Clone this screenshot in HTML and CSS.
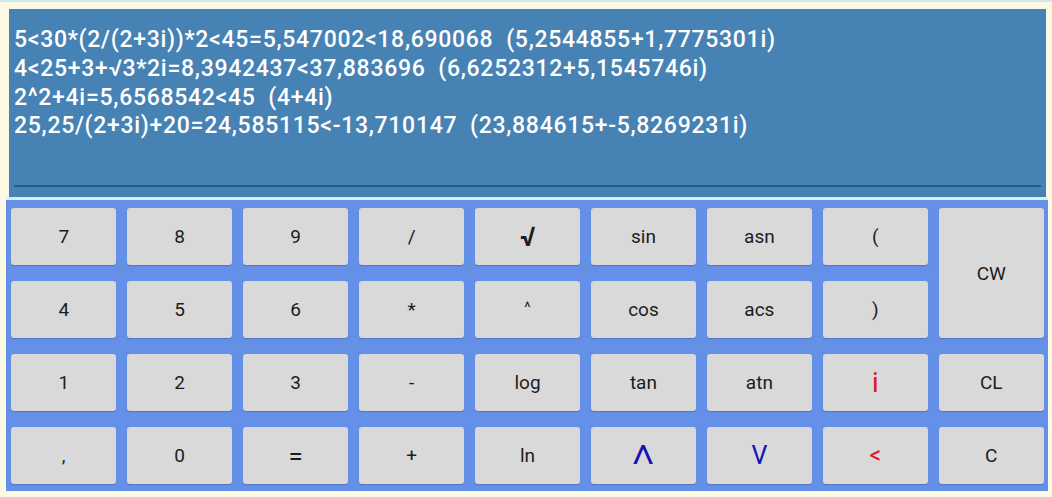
FILE: index.html
```html
<!DOCTYPE html>
<html>
<head>
<meta charset="utf-8">
<link rel="stylesheet" href="styles.css">
</head>
<body>
<div class="app">
  <div class="display">
    <div class="lines">
      <div class="line">5&lt;30*(2/(2+3i))*2&lt;45=5,547002&lt;18,690068&nbsp;&nbsp;(5,2544855+1,7775301i)</div>
      <div class="line">4&lt;25+3+√3*2i=8,3942437&lt;37,883696&nbsp;&nbsp;(6,6252312+5,1545746i)</div>
      <div class="line">2^2+4i=5,6568542&lt;45&nbsp;&nbsp;(4+4i)</div>
      <div class="line">25,25/(2+3i)+20=24,585115&lt;-13,710147&nbsp;&nbsp;(23,884615+-5,8269231i)</div>
    </div>
    <div class="rule"></div>
  </div>
  <div class="sep"></div>
  <div class="keypad">
    <div class="key">7</div>
    <div class="key">8</div>
    <div class="key">9</div>
    <div class="key">/</div>
    <div class="key sqrt">√</div>
    <div class="key">sin</div>
    <div class="key">asn</div>
    <div class="key">(</div>
    <div class="key tall">CW</div>

    <div class="key">4</div>
    <div class="key">5</div>
    <div class="key">6</div>
    <div class="key">*</div>
    <div class="key small">^</div>
    <div class="key">cos</div>
    <div class="key">acs</div>
    <div class="key">)</div>

    <div class="key">1</div>
    <div class="key">2</div>
    <div class="key">3</div>
    <div class="key">-</div>
    <div class="key">log</div>
    <div class="key">tan</div>
    <div class="key">atn</div>
    <div class="key red imag">i</div>
    <div class="key">CL</div>

    <div class="key">,</div>
    <div class="key">0</div>
    <div class="key eq">=</div>
    <div class="key">+</div>
    <div class="key">ln</div>
    <div class="key blue"><span class="wide">Λ</span></div>
    <div class="key blue">V</div>
    <div class="key red lt">&lt;</div>
    <div class="key">C</div>
  </div>
</div>
</body>
</html>
```

FILE: styles.css
```css
html, body {
  margin: 0;
  padding: 0;
}
body {
  background: #fbf8e4;
  width: 1052px;
  height: 497px;
  overflow: hidden;
  font-family: Roboto, "Liberation Sans", sans-serif;
}
.app {
  border-top: 2px solid #cfe7e9;
  padding: 0 4px 0 6px;
}
.display {
  margin: 7px 2px 0 3px;
  height: 188px;
  background: #4682b4;
  display: flex;
  flex-direction: column;
  box-sizing: border-box;
  padding: 17px 5px 10px 5px;
}
.lines {
  color: #ffffff;
  font-size: 23px;
  line-height: 28.8px;
  letter-spacing: 0.7px;
  font-weight: 500;
  white-space: nowrap;
}
.rule {
  margin-top: auto;
  height: 2px;
  background: #285a82;
}
.sep {
  height: 3px;
  background: #d9eef0;
}
.keypad {
  background: #6490e8;
  display: grid;
  grid-template-columns: repeat(9, 1fr);
  grid-template-rows: repeat(4, 57px);
  column-gap: 10.5px;
  row-gap: 16px;
  padding: 8px 4px 7px 5px;
}
.key {
  background: #d9d9d9;
  border-radius: 3px;
  box-shadow: 0 1px 1px rgba(0, 0, 0, 0.18);
  display: flex;
  align-items: center;
  justify-content: center;
  font-size: 19px;
  color: #1c1c1c;
}
.tall {
  grid-row: span 2;
}
.sqrt {
  font-size: 27px;
  font-weight: 700;
}
.small {
  font-size: 15px;
  padding-bottom: 6px;
}
.eq {
  font-size: 26px;
}
.red {
  color: #e0101e;
}
.imag {
  font-size: 27px;
}
.lt {
  font-size: 23px;
}
.blue {
  color: #1414b4;
  font-size: 25px;
}
.wide {
  display: inline-block;
  transform: scaleX(1.3);
}
```
